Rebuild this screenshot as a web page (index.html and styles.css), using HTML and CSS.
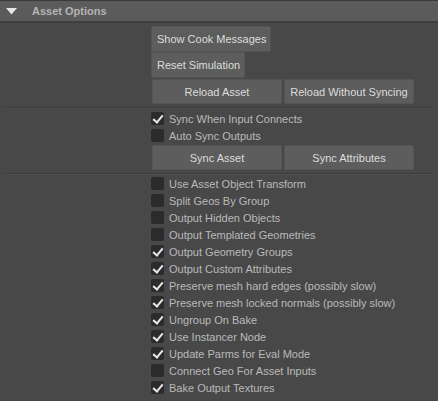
FILE: index.html
```html
<!DOCTYPE html>
<html>
<head>
<meta charset="utf-8">
<link rel="stylesheet" href="styles.css">
</head>
<body>
<div class="panel">
  <div class="header">
    <svg class="tri" width="11" height="7" viewBox="0 0 11 7"><polygon points="0,0 11,0 5.5,6.5" fill="#e6e6e6"/></svg>
    <span class="title">Asset Options</span>
  </div>
  <div class="body">
    <div class="group">
      <div class="stack">
        <button class="btn w120">Show Cook Messages</button>
        <button class="btn w94">Reset Simulation</button>
      </div>
      <div class="pair">
        <button class="btn half">Reload Asset</button>
        <button class="btn half">Reload Without Syncing</button>
      </div>
    </div>
    <div class="sep"></div>
    <div class="group">
      <label class="row"><span class="cb on"></span>Sync When Input Connects</label>
      <label class="row"><span class="cb"></span>Auto Sync Outputs</label>
      <div class="pair">
        <button class="btn half">Sync Asset</button>
        <button class="btn half">Sync Attributes</button>
      </div>
    </div>
    <div class="sep"></div>
    <div class="group">
      <label class="row"><span class="cb"></span>Use Asset Object Transform</label>
      <label class="row"><span class="cb"></span>Split Geos By Group</label>
      <label class="row"><span class="cb"></span>Output Hidden Objects</label>
      <label class="row"><span class="cb"></span>Output Templated Geometries</label>
      <label class="row"><span class="cb on"></span>Output Geometry Groups</label>
      <label class="row"><span class="cb on"></span>Output Custom Attributes</label>
      <label class="row"><span class="cb on"></span>Preserve mesh hard edges (possibly slow)</label>
      <label class="row"><span class="cb on"></span>Preserve mesh locked normals (possibly slow)</label>
      <label class="row"><span class="cb on"></span>Ungroup On Bake</label>
      <label class="row"><span class="cb on"></span>Use Instancer Node</label>
      <label class="row"><span class="cb on"></span>Update Parms for Eval Mode</label>
      <label class="row"><span class="cb"></span>Connect Geo For Asset Inputs</label>
      <label class="row"><span class="cb on"></span>Bake Output Textures</label>
    </div>
  </div>
</div>
</body>
</html>
```
FILE: styles.css
```css
html, body {
  margin: 0;
  padding: 0;
  background: #484848;
  font-family: "Liberation Sans", Arial, sans-serif;
  font-size: 11px;
}
.panel {
  width: 438px;
  height: 401px;
  overflow: hidden;
  background: #484848;
  border-top: 1px solid #3a3a3a;
  box-sizing: border-box;
}
.header {
  height: 20px;
  background: #5b5b5b;
  border-bottom: 2px solid #3e3e3e;
  display: flex;
  align-items: center;
}
.tri {
  margin-left: 6px;
}
.title {
  margin-left: 15px;
  font-weight: bold;
  color: #b4b4b4;
  font-size: 11px;
}
.body {
  padding-top: 3px;
}
.group {
  display: flex;
  flex-direction: column;
  align-items: flex-start;
  padding-left: 151px;
}
.stack {
  display: flex;
  flex-direction: column;
  align-items: flex-start;
}
.btn {
  font-family: inherit;
  font-size: 11px;
  color: #dcdcdc;
  background: #5d5d5d;
  border: 1px solid #545454;
  border-radius: 1px;
  height: 26px;
  padding: 0 0 0 5px;
  margin: 0;
  text-align: left;
  white-space: nowrap;
  overflow: hidden;
}
.w120 { width: 120px; }
.w94 { width: 94px; }
.pair {
  display: flex;
  gap: 2px;
  margin-left: 1px;
  margin-top: 1px;
}
.btn.half {
  width: 130px;
  height: 25px;
  padding: 0;
  text-align: center;
}
.sep {
  margin: 3px 6px 1px 5px;
  height: 1px;
  background: #3c3c3c;
  border-bottom: 1px solid #4f4f4f;
}
.sep + .group .row:first-child { }
.row {
  display: flex;
  align-items: center;
  height: 17px;
  color: #bababa;
  white-space: nowrap;
}
.cb {
  width: 13px;
  height: 13px;
  background: #2b2b2b;
  border-radius: 2px;
  margin-right: 5px;
  position: relative;
  flex: none;
}
.cb.on::after {
  content: "";
  position: absolute;
  left: 4px;
  top: 1px;
  width: 4px;
  height: 8px;
  border-right: 2px solid #e8e8e8;
  border-bottom: 2px solid #e8e8e8;
  transform: rotate(40deg);
}
.group:last-child {
  margin-top: -1px;
}
```
